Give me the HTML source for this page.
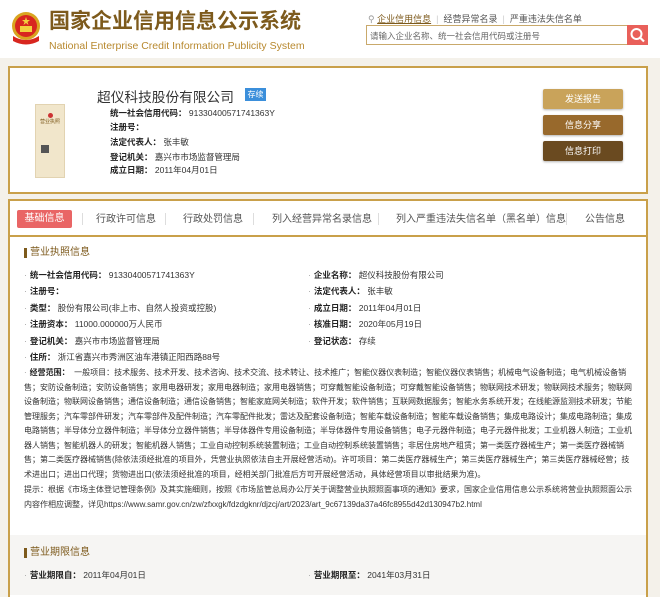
<!DOCTYPE html>
<html><head><meta charset="utf-8"><style>
*{margin:0;padding:0;box-sizing:border-box}
body{width:660px;height:588px;overflow:hidden;background:#f4f1ea;font-family:"Liberation Sans","Noto Sans CJK SC",sans-serif;color:#333;position:relative}
.a{position:absolute;white-space:nowrap}
.f{font-size:9px}
.row{position:absolute;font-size:8.5px;white-space:nowrap}
.row b{color:#222}
.dot{color:#999;margin-right:3px}
.btn{position:absolute;left:543px;width:80px;height:20px;color:#fff;font-size:9px;text-align:center;line-height:20px;border-radius:2px;box-shadow:0 1px 2px rgba(0,0,0,.3)}
.tab{position:absolute;top:210px;font-size:10px;color:#555;white-space:nowrap}
.sep{position:absolute;top:213px;width:1px;height:12px;background:#ddd}
</style></head><body>
<div class="a" style="left:0;top:0;width:660px;height:58px;background:#fff"></div>
<svg class="a" style="left:9px;top:10px" width="34" height="36" viewBox="0 0 34 36">
<circle cx="17" cy="16" r="14" fill="#d9a520"/><circle cx="17" cy="16" r="11" fill="#d8261f"/>
<polygon points="17,7 18,10 21,10 18.5,12 19.5,15 17,13 14.5,15 15.5,12 13,10 16,10" fill="#f3d03e"/>
<rect x="11" y="16" width="12" height="6" fill="#f3d03e"/>
<path d="M4 26 Q17 34 30 26 L30 31 Q17 38 4 31Z" fill="#d8261f"/></svg>
<div class="a" style="left:49px;top:9px;font-size:21px;line-height:25px;font-weight:bold;color:#7d5a1c">国家企业信用信息公示系统</div>
<div class="a" style="left:49px;top:39px;font-size:10.5px;line-height:14px;color:#b8892f">National Enterprise Credit Information Publicity System</div>
<div class="a f" style="left:368px;top:12px;color:#555"><span style="color:#999">&#9906;</span> <span style="text-decoration:underline;color:#7d5a1c">企业信用信息</span> &nbsp;<span style="color:#ccc">|</span>&nbsp; 经营异常名录 &nbsp;<span style="color:#ccc">|</span>&nbsp; 严重违法失信名单</div>
<div class="a" style="left:366px;top:25px;width:262px;height:20px;border:1px solid #c9a96b;background:#fff;font-size:8.5px;color:#666;padding:4px 3px">请输入企业名称、统一社会信用代码或注册号</div>
<div class="a" style="left:627px;top:25px;width:21px;height:20px;background:#e9605a"><svg width="21" height="20"><circle cx="9.5" cy="9" r="5" fill="none" stroke="#fff" stroke-width="2"/><line x1="13" y1="12.5" x2="17" y2="16.5" stroke="#fff" stroke-width="2.2"/></svg></div>

<div class="a" style="left:8px;top:66px;width:640px;height:128px;background:#fff;border:2px solid #c9a04a"></div>
<div class="a" style="left:35px;top:104px;width:30px;height:74px;background:#f1e6cb;border:1px solid #e2d3b1"><div style="margin:8px auto 0;width:5px;height:5px;border-radius:50%;background:#c33"></div><div style="font-size:5px;color:#7d5a1c;text-align:center">营业执照</div><div style="margin:20px 0 0 5px;width:8px;height:8px;background:#555"></div></div>
<div class="a" style="left:97px;top:86px;font-size:13.7px;color:#333">超仪科技股份有限公司</div>
<div class="a" style="left:245px;top:88px;width:21px;height:13px;background:#3b8fdb;color:#fff;font-size:8px;text-align:center;line-height:13px">存续</div>
<div class="row" style="left:110px;top:107px"><b>统一社会信用代码：</b> 91330400571741363Y</div>
<div class="row" style="left:110px;top:121px"><b>注册号：</b></div>
<div class="row" style="left:110px;top:136px"><b>法定代表人：</b> 张丰敏</div>
<div class="row" style="left:110px;top:151px"><b>登记机关：</b> 嘉兴市市场监督管理局</div>
<div class="row" style="left:110px;top:164px"><b>成立日期：</b> 2011年04月01日</div>
<div class="btn" style="top:89px;background:#c9a35a">发送报告</div>
<div class="btn" style="top:115px;background:#98692c">信息分享</div>
<div class="btn" style="top:141px;background:#6a4a20">信息打印</div>

<div class="a" style="left:8px;top:199px;width:640px;height:38px;background:#fff;border:2px solid #c9a04a"></div>
<div class="a" style="left:17px;top:210px;width:55px;height:18px;background:#e96565;color:#fff;font-size:10px;text-align:center;line-height:18px;border-radius:2px">基础信息</div>
<div class="sep" style="left:82px"></div><div class="tab" style="left:96px">行政许可信息</div>
<div class="sep" style="left:165px"></div><div class="tab" style="left:183px">行政处罚信息</div>
<div class="sep" style="left:253px"></div><div class="tab" style="left:272px">列入经营异常名录信息</div>
<div class="sep" style="left:378px"></div><div class="tab" style="left:396px">列入严重违法失信名单（黑名单）信息</div>
<div class="sep" style="left:566px"></div><div class="tab" style="left:585px">公告信息</div>

<div class="a" style="left:8px;top:237px;width:640px;height:360px;background:#fff;border-left:2px solid #c9a04a;border-right:2px solid #c9a04a"></div>
<div class="a" style="left:10px;top:535px;width:636px;height:60px;background:#f6f5f3"></div>
<div class="a" style="left:24px;top:248px;font-size:10px;color:#7d5a1c;border-left:3px solid #7d5a1c;padding-left:3px;line-height:10px">营业执照信息</div>
<div class="row" style="left:24px;top:269px"><span class="dot">·</span><b>统一社会信用代码：</b> 91330400571741363Y</div>
<div class="row" style="left:308px;top:269px"><span class="dot">·</span><b>企业名称：</b> 超仪科技股份有限公司</div>
<div class="row" style="left:24px;top:285px"><span class="dot">·</span><b>注册号：</b></div>
<div class="row" style="left:308px;top:285px"><span class="dot">·</span><b>法定代表人：</b> 张丰敏</div>
<div class="row" style="left:24px;top:302px"><span class="dot">·</span><b>类型：</b> 股份有限公司(非上市、自然人投资或控股)</div>
<div class="row" style="left:308px;top:302px"><span class="dot">·</span><b>成立日期：</b> 2011年04月01日</div>
<div class="row" style="left:24px;top:318px"><span class="dot">·</span><b>注册资本：</b> 11000.000000万人民币</div>
<div class="row" style="left:308px;top:318px"><span class="dot">·</span><b>核准日期：</b> 2020年05月19日</div>
<div class="row" style="left:24px;top:335px"><span class="dot">·</span><b>登记机关：</b> 嘉兴市市场监督管理局</div>
<div class="row" style="left:308px;top:335px"><span class="dot">·</span><b>登记状态：</b> 存续</div>
<div class="row" style="left:24px;top:351px"><span class="dot">·</span><b>住所：</b> 浙江省嘉兴市秀洲区油车港镇正阳西路88号</div>
<div class="a" style="left:24px;top:366px;width:610px;font-size:8px;line-height:14.5px;white-space:normal;color:#333"><span class="dot">·</span><b style="color:#222">经营范围：</b>&nbsp; 一般项目：技术服务、技术开发、技术咨询、技术交流、技术转让、技术推广；智能仪器仪表制造；智能仪器仪表销售；机械电气设备制造；电气机械设备销售；安防设备制造；安防设备销售；家用电器研发；家用电器制造；家用电器销售；可穿戴智能设备制造；可穿戴智能设备销售；物联网技术研发；物联网技术服务；物联网设备制造；物联网设备销售；通信设备制造；通信设备销售；智能家庭网关制造；软件开发；软件销售；互联网数据服务；智能水务系统开发；在线能源监测技术研发；节能管理服务；汽车零部件研发；汽车零部件及配件制造；汽车零配件批发；雷达及配套设备制造；智能车载设备制造；智能车载设备销售；集成电路设计；集成电路制造；集成电路销售；半导体分立器件制造；半导体分立器件销售；半导体器件专用设备制造；半导体器件专用设备销售；电子元器件制造；电子元器件批发；工业机器人制造；工业机器人销售；智能机器人的研发；智能机器人销售；工业自动控制系统装置制造；工业自动控制系统装置销售；非居住房地产租赁；第一类医疗器械生产；第一类医疗器械销售；第二类医疗器械销售(除依法须经批准的项目外，凭营业执照依法自主开展经营活动)。许可项目：第二类医疗器械生产；第三类医疗器械生产；第三类医疗器械经营；技术进出口；进出口代理；货物进出口(依法须经批准的项目，经相关部门批准后方可开展经营活动，具体经营项目以审批结果为准)。<div style="margin-top:1px">提示：根据《市场主体登记管理条例》及其实施细则，按照《市场监管总局办公厅关于调整营业执照照面事项的通知》要求，国家企业信用信息公示系统将营业执照照面公示内容作相应调整，详见https://www.samr.gov.cn/zw/zfxxgk/fdzdgknr/djzcj/art/2023/art_9c67139da37a46fc8955d42d130947b2.html</div></div>
<div class="a" style="left:24px;top:548px;font-size:10px;color:#7d5a1c;border-left:3px solid #7d5a1c;padding-left:3px;line-height:10px">营业期限信息</div>
<div class="row" style="left:24px;top:569px"><span class="dot">·</span><b>营业期限自：</b> 2011年04月01日</div>
<div class="row" style="left:308px;top:569px"><span class="dot">·</span><b>营业期限至：</b> 2041年03月31日</div>
</body></html>
